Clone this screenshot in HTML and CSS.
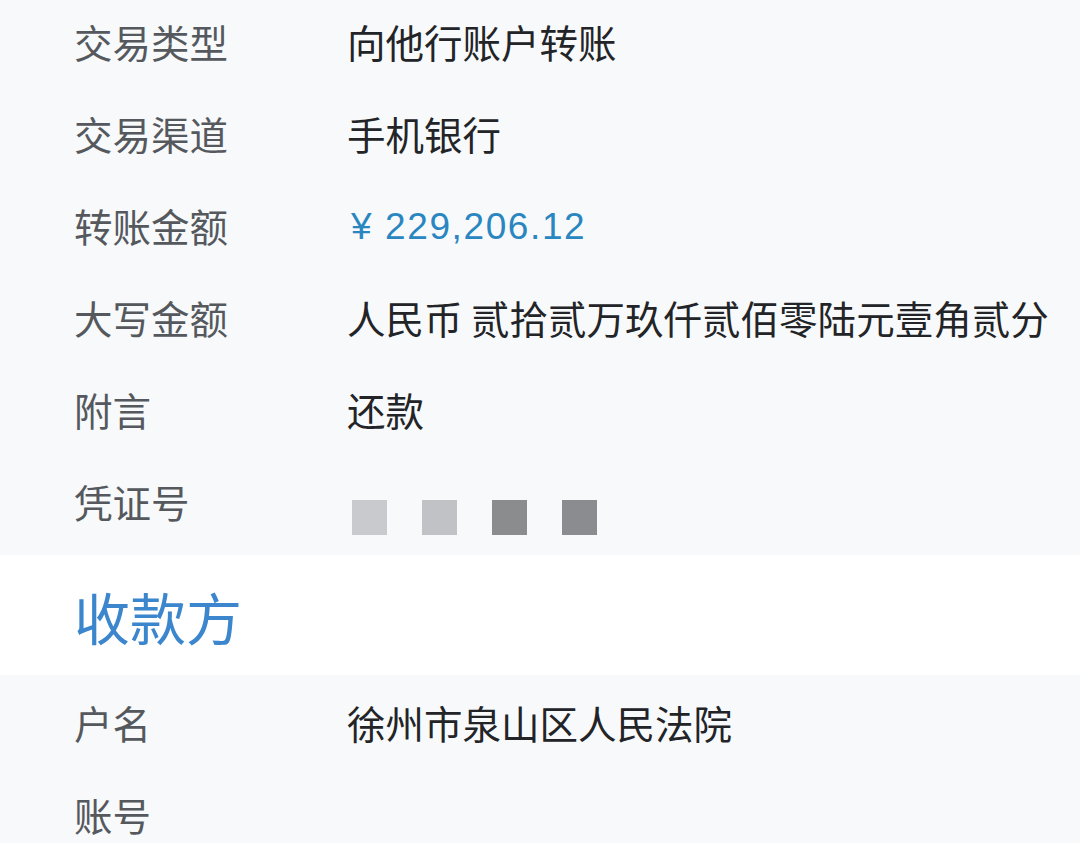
FILE: index.html
```html
<!DOCTYPE html>
<html lang="zh-CN">
<head>
<meta charset="utf-8">
<link rel="stylesheet" href="styles.css">
</head>
<body>
<div class="page">
  <section class="detail top">
    <div class="row"><span class="label">交易类型</span><span class="value">向他行账户转账</span></div>
    <div class="row"><span class="label">交易渠道</span><span class="value">手机银行</span></div>
    <div class="row"><span class="label">转账金额</span><span class="value amount">¥ 229,206.12</span></div>
    <div class="row"><span class="label">大写金额</span><span class="value">人民币 贰拾贰万玖仟贰佰零陆元壹角贰分</span></div>
    <div class="row"><span class="label">附言</span><span class="value">还款</span></div>
    <div class="row"><span class="label">凭证号</span><span class="value masks"><i class="sq s1"></i><i class="sq s2"></i><i class="sq s3"></i><i class="sq s4"></i></span></div>
  </section>
  <h2 class="heading">收款方</h2>
  <section class="detail bottom">
    <div class="row"><span class="label">户名</span><span class="value">徐州市泉山区人民法院</span></div>
    <div class="row"><span class="label">账号</span><span class="value"></span></div>
  </section>
</div>
</body>
</html>
```
FILE: styles.css
```css
html, body {
  margin: 0;
  padding: 0;
  background: #f8f9fb;
}
.page {
  width: 1080px;
  height: 843px;
  overflow: hidden;
  font-family: "Noto Sans CJK SC", "Noto Sans", sans-serif;
}
.detail {
  background: #f8f9fb;
}
.top {
  margin-top: -5px;
  padding-bottom: 8px;
}
.bottom {
  padding-top: 1px;
}
.row {
  display: flex;
  align-items: center;
  height: 92px;
  font-size: 38.5px;
}
.label {
  width: 273px;
  padding-left: 74px;
  color: #55595e;
  flex-shrink: 0;
}
.value {
  color: #222427;
  white-space: nowrap;
}
.amount {
  color: #2a86c0;
  font-family: "Liberation Sans", "Noto Sans CJK SC", sans-serif;
  font-size: 37px;
  letter-spacing: 1.6px;
  padding-left: 4px;
  padding-top: 3px;
}
.masks {
  display: flex;
  gap: 35px;
  padding-left: 5px;
  padding-top: 32px;
}
.sq {
  display: block;
  width: 35px;
  height: 35px;
}
.s1 { background: #c8cace; }
.s2 { background: #c0c2c5; }
.s3 { background: #8a8c8e; }
.s4 { background: #8b8c8f; }
.heading {
  margin: 0;
  background: #ffffff;
  height: 120px;
  display: flex;
  align-items: center;
  padding-left: 74px;
  font-size: 56px;
  font-weight: 400;
  color: #3b86cc;
}
```
